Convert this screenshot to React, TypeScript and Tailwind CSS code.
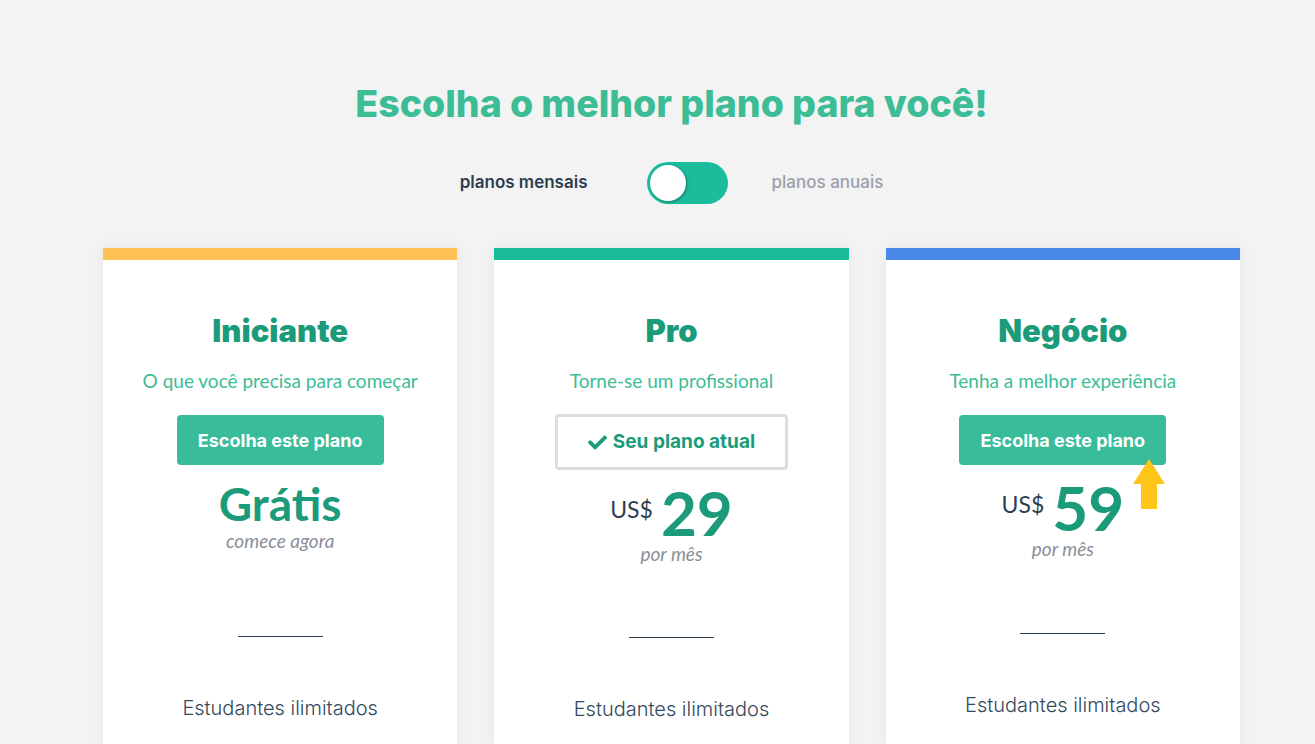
import { FaCheck } from 'react-icons/fa';

const display = "font-['Inter','Noto_Sans',sans-serif]";
const body = "font-['Lato','Noto_Sans',sans-serif]";

type Plan = {
  name: string;
  tagline: string;
  accent: string;
  current?: boolean;
  price?: string;
  note: string;
  arrow?: boolean;
  gap: string;
};

const plans: Plan[] = [
  { name: 'Iniciante', tagline: 'O que você precisa para começar', accent: 'bg-[#ffc153]', note: 'comece agora', gap: 'h-[171px]' },
  { name: 'Pro', tagline: 'Torne-se um profissional', accent: 'bg-[#1abc9c]', current: true, price: '29', note: 'por mês', gap: 'h-[167px]' },
  { name: 'Negócio', tagline: 'Tenha a melhor experiência', accent: 'bg-[#4a89e8]', price: '59', note: 'por mês', arrow: true, gap: 'h-[168px]' },
];

function PlanCard({ plan }: { plan: Plan }) {
  return (
    <div className="bg-white shadow-[0_0_12px_rgba(0,0,0,0.06)] h-[496px] flex flex-col items-center">
      <div className={`w-full h-3 ${plan.accent}`} />
      <h2 className={`${display} mt-[53px] text-[31px] leading-9 font-black text-[#1b9b7a]`}>{plan.name}</h2>
      <p className={`${body} mt-[19px] text-[19px] leading-[26px] text-[#3cbd96]`}>{plan.tagline}</p>

      <div className="relative mt-[21px]">
        {plan.current ? (
          <button className={`${display} -mt-px h-14 w-[233px] rounded-[4px] border-[3px] border-[#dddddd] bg-white text-[19px] font-bold text-[#1b9b7a] flex items-center justify-center gap-1.5`}>
            <FaCheck className="w-[19px] h-[19px]" /> Seu plano atual
          </button>
        ) : (
          <button className={`${display} h-[50px] w-[207px] rounded-[4px] bg-[#38bc9a] text-white text-[18px] font-bold`}>
            Escolha este plano
          </button>
        )}
        {plan.arrow && (
          <svg className="absolute right-px top-[44px]" width="32" height="50" viewBox="0 0 32 50">
            <path d="M16 0 L32 25 L24 25 L24 50 L8 50 L8 25 L0 25 Z" fill="#ffc61a" />
          </svg>
        )}
      </div>

      <div className={`${plan.gap} flex flex-col items-center`}>
        {plan.price ? (
          <>
            <div className={`${body} mt-[14px] flex items-start text-[#1b9b7a]`}>
              <span className="mt-[14px] mr-2 text-[23px] leading-none text-[#2d3e50]">US$</span>
              <span className="text-[62px] leading-[56px] font-bold">{plan.price}</span>
            </div>
            <span className={`${body} mt-[2px] italic text-[19px] leading-6 text-[#8a8f99]`}>{plan.note}</span>
          </>
        ) : (
          <>
            <div className={`${body} mt-[16px] text-[46px] leading-[46px] font-bold text-[#1b9b7a]`}>Grátis</div>
            <span className={`${body} mt-[2px] italic text-[19px] leading-6 text-[#8a8f99]`}>{plan.note}</span>
          </>
        )}
      </div>

      <div className="w-[85px] h-px bg-[#2d3e50]" />
      <p className={`${display} mt-[57px] text-[20px] leading-7 font-light text-[#34495e]`}>Estudantes ilimitados</p>
    </div>
  );
}

export default function App() {
  return (
    <div className="h-[744px] overflow-hidden bg-[#f3f3f3] flex flex-col items-center pt-[82px] pl-[28px]">
      <h1 className={`${display} text-[37.5px] leading-[44px] font-extrabold text-[#3cbd96]`}>
        Escolha o melhor plano para você!
      </h1>

      <div className="mt-[36px] flex items-center h-[42px]">
        <span className={`${display} text-[17px] font-semibold text-[#2d3e50]`}>planos mensais</span>
        <div className="ml-[59px] w-[81px] h-[42px] rounded-full bg-[#1abc9c] p-[3px] flex items-center">
          <div className="w-9 h-9 rounded-full bg-white shadow-[1px_1px_3px_rgba(0,0,0,0.35)]" />
        </div>
        <span className={`${display} ml-[44px] text-[17px] font-medium text-[#9aa0aa]`}>planos anuais</span>
      </div>

      <div className="mt-[44px] grid grid-cols-3 gap-[37px] w-[1137px]">
        {plans.map((p) => (
          <PlanCard key={p.name} plan={p} />
        ))}
      </div>
    </div>
  );
}
